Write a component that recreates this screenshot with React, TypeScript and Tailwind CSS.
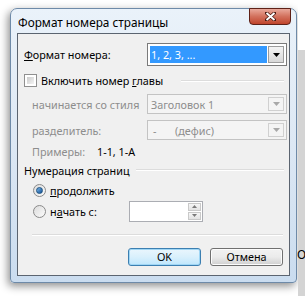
const font = "font-['Noto_Sans','Liberation_Sans',sans-serif]";

function Arrow({ disabled }: { disabled?: boolean }) {
  return (
    <svg width="7" height="4" viewBox="0 0 7 4">
      <path d="M0 0h7L3.5 4z" fill={disabled ? "#a8a8a8" : "#000"} />
    </svg>
  );
}

function Combo({
  text,
  active,
  h,
}: {
  text: React.ReactNode;
  active?: boolean;
  h: string;
}) {
  return (
    <div
      className={`flex w-[140px] shrink-0 ${h} border ${
        active ? "border-[#7a7a7a] bg-white" : "border-[#c3c3c3] bg-[#f4f4f4]"
      } p-[2px]`}
    >
      <div
        className={`flex-1 flex items-center px-[1px] ${
          active ? "bg-[#3399ff] text-white" : "text-[#8d8d8d]"
        }`}
      >
        {text}
      </div>
      <div
        className={`w-[16px] ml-[1px] flex items-center justify-center border ${
          active
            ? "border-[#9c9c9c] bg-gradient-to-b from-[#f4f4f4] to-[#d8d8d8]"
            : "border-[#d0d0d0] bg-[#f4f4f4]"
        }`}
      >
        <Arrow disabled={!active} />
      </div>
    </div>
  );
}

function Radio({ checked }: { checked?: boolean }) {
  return (
    <div className="w-[13px] h-[13px] rounded-full border border-[#8a8a8a] bg-gradient-to-br from-[#dcdcdc] to-[#fbfbfb] flex items-center justify-center">
      {checked && (
        <div className="w-[7px] h-[7px] rounded-full bg-gradient-to-br from-[#7ab8ea] to-[#0d4f95] border border-[#1c5180]" />
      )}
    </div>
  );
}

export default function App() {
  return (
    <div className={`w-[305px] h-[296px] bg-white flex ${font} text-[10.8px] leading-[15px] text-black overflow-hidden whitespace-nowrap`}>
      <div className="w-[298px] pt-[8px] pl-[10px]">
        <div className="w-[287px] h-[275px] rounded-t-[7px] rounded-b-[4px] border border-[#6e8aa8] bg-gradient-to-b from-[#eaf2fa] via-[#dde8f4] to-[#cadcef] shadow-[-2px_3px_9px_rgba(0,0,0,0.45)] flex flex-col">
          {/* title bar */}
          <div className="h-[24px] flex items-start justify-between pl-[7px] pr-[5px]">
            <span className="mt-[6px] text-[11.8px] leading-[14px]">Формат номера страницы</span>
            <div className="w-[42px] h-[17px] -mt-[1px] rounded-b-[4px] border border-[#5e2117] bg-gradient-to-b from-[#e9a99b] via-[#d2705c] to-[#c0442b] flex items-center justify-center">
              <svg width="11" height="9" viewBox="0 0 11 9">
                <path d="M1.5 1L9.5 8M9.5 1L1.5 8" stroke="#4a1a12" strokeWidth="3.4" strokeLinecap="square" />
                <path d="M1.5 1L9.5 8M9.5 1L1.5 8" stroke="#fff" strokeWidth="2" />
              </svg>
            </div>
          </div>
          {/* client area */}
          <div className="mx-[6px] mb-[6px] flex-1 border border-[#5b6470] bg-[#f0f0f0] flex flex-col pl-[6px] pr-[2px]">
            <div className="mt-[9px] flex items-center justify-between">
              <span>
                <span className="underline">Ф</span>ормат номера:
              </span>
              <Combo text="1, 2, 3, ..." active h="h-[23px]" />
            </div>

            <div className="mt-[7px] flex items-center gap-[4px] h-[15px]">
              <div className="w-[13px] h-[13px] border border-[#8f8f8f] bg-white p-[2px]">
                <div className="w-full h-full bg-gradient-to-br from-[#cbcbcb] to-[#f4f4f4]" />
              </div>
              <span>
                Включить номер <span className="underline">г</span>лавы
              </span>
              <div className="flex-1 ml-[14px] mr-[3px] border-t border-[#dcdcdc] border-b-white border-b" />
            </div>

            <div className="mt-[6px] flex items-center justify-between pl-[8px]">
              <span className="text-[#8d8d8d]">начинается со стиля</span>
              <Combo text="Заголовок 1" h="h-[20px]" />
            </div>

            <div className="mt-[6px] flex items-center justify-between pl-[8px]">
              <span className="text-[#8d8d8d]">разделитель:</span>
              <Combo
                text={
                  <span className="flex">
                    <span className="w-[24px] pl-[2px]">-</span>
                    <span>(дефис)</span>
                  </span>
                }
                h="h-[20px]"
              />
            </div>

            <div className="mt-[3px] flex items-center pl-[8px] h-[16px]">
              <span className="text-[#8d8d8d] w-[65px]">Примеры:</span>
              <span>1-1, 1-А</span>
            </div>

            <div className="mt-[3px] flex items-center h-[16px]">
              <span>Нумерация страниц</span>
              <div className="flex-1 ml-[6px] mr-[3px] border-t border-[#dcdcdc] border-b-white border-b" />
            </div>

            <div className="mt-[4px] flex items-center gap-[4px] pl-[9px] h-[16px]">
              <Radio checked />
              <span>
                <span className="underline">п</span>родолжить
              </span>
            </div>

            <div className="mt-[2px] flex items-center pl-[9px] h-[22px]">
              <div className="flex items-center gap-[4px] w-[96px]">
                <Radio />
                <span>
                  н<span className="underline">а</span>чать с:
                </span>
              </div>
              <div className="w-[74px] h-[21px] border border-[#abadb3] bg-white flex justify-end p-[1px]">
                <div className="w-[13px] flex flex-col gap-[1px]">
                  <div className="flex-1 border border-[#c9c9c9] bg-gradient-to-b from-[#f6f6f6] to-[#e3e3e3] flex items-center justify-center">
                    <svg width="5" height="3" viewBox="0 0 5 3"><path d="M0 3h5L2.5 0z" fill="#7a7a7a" /></svg>
                  </div>
                  <div className="flex-1 border border-[#c9c9c9] bg-gradient-to-b from-[#f6f6f6] to-[#e3e3e3] flex items-center justify-center">
                    <svg width="5" height="3" viewBox="0 0 5 3"><path d="M0 0h5L2.5 3z" fill="#7a7a7a" /></svg>
                  </div>
                </div>
              </div>
            </div>

            <div className="mt-[12px] ml-[8px] mr-[4px] border-t border-[#dcdcdc] border-b border-b-white" />

            <div className="mt-[12px] flex justify-end gap-[9px] pr-[4px]">
              <button className="w-[73px] h-[18px] rounded-[3px] border border-[#3c7fb1] shadow-[inset_0_0_0_1px_#9fd6f5] bg-gradient-to-b from-[#eaf6fd] via-[#d9f0fc] to-[#bee6fd] flex items-center justify-center leading-none">
                OK
              </button>
              <button className="w-[73px] h-[18px] rounded-[3px] border border-[#707070] shadow-[inset_0_0_0_1px_#fcfcfc] bg-gradient-to-b from-[#f2f2f2] via-[#ebebeb] to-[#cfcfcf] flex items-center justify-center leading-none">
                Отмена
              </button>
            </div>
          </div>
        </div>
      </div>
      <div className="w-[7px] flex flex-col">
        <div className="h-[50px] bg-white" />
        <div className="flex-1 flex">
          <div className="w-[1px] bg-[#6b7682]" />
          <div className="flex-1 bg-[#d4d4d4] flex flex-col">
            <div className="h-[199px]" />
            <span className="text-[12px] leading-none -ml-[1px]">О</span>
          </div>
        </div>
      </div>
    </div>
  );
}
